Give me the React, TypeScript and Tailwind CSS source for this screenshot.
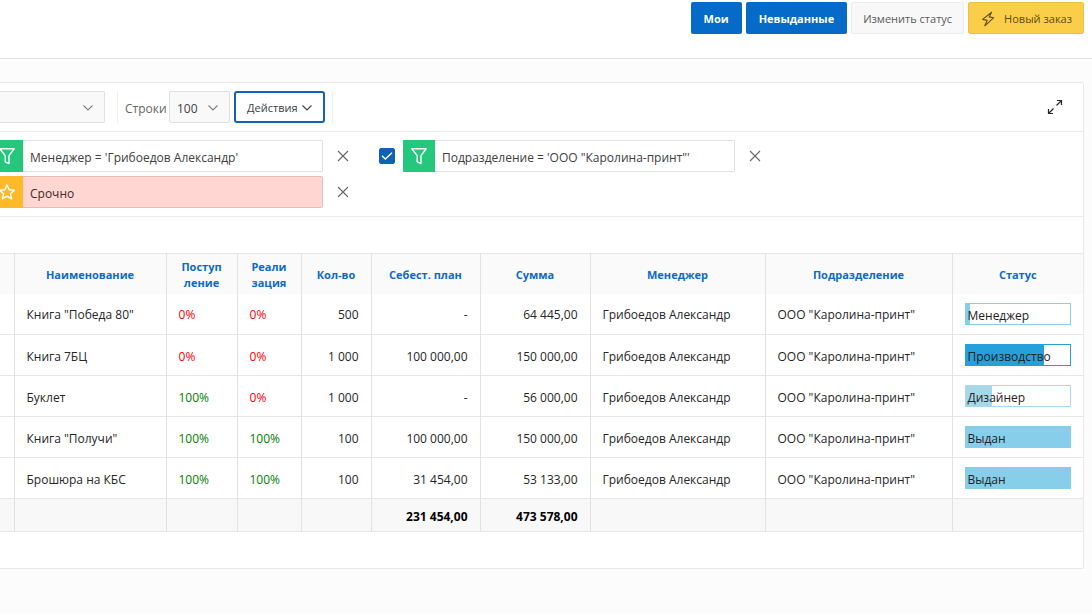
import type { ReactNode } from 'react';
import clsx from 'clsx';

type Order = {
  name: string;
  income: number;
  shipped: number;
  qty: string;
  cost: string;
  total: string;
  status: { label: string; percent: number; fill: string; border: string };
};

const MANAGER = 'Грибоедов Александр';
const DEPARTMENT = 'ООО "Каролина-принт"';

const issued = { label: 'Выдан', percent: 100, fill: 'bg-[#87ceeb]', border: 'border-[#87ceeb]' };

const orders: Order[] = [
  {
    name: 'Книга "Победа 80"',
    income: 0,
    shipped: 0,
    qty: '500',
    cost: '-',
    total: '64 445,00',
    status: { label: 'Менеджер', percent: 4, fill: 'bg-[#87ceeb]', border: 'border-[#87ceeb]' },
  },
  {
    name: 'Книга 7БЦ',
    income: 0,
    shipped: 0,
    qty: '1 000',
    cost: '100 000,00',
    total: '150 000,00',
    status: { label: 'Производство', percent: 75, fill: 'bg-[#26a0da]', border: 'border-[#26a0da]' },
  },
  {
    name: 'Буклет',
    income: 100,
    shipped: 0,
    qty: '1 000',
    cost: '-',
    total: '56 000,00',
    status: { label: 'Дизайнер', percent: 25, fill: 'bg-[#a6d8ea]', border: 'border-[#a9d8ee]' },
  },
  {
    name: 'Книга "Получи"',
    income: 100,
    shipped: 100,
    qty: '100',
    cost: '100 000,00',
    total: '150 000,00',
    status: issued,
  },
  {
    name: 'Брошюра на КБС',
    income: 100,
    shipped: 100,
    qty: '100',
    cost: '31 454,00',
    total: '53 133,00',
    status: issued,
  },
];

const columns = [
  { title: '', width: 'w-[14px]' },
  { title: 'Наименование', width: 'w-[152px]' },
  { title: 'Поступ ление', width: 'w-[71px]' },
  { title: 'Реали зация', width: 'w-[64px]' },
  { title: 'Кол-во', width: 'w-[70px]' },
  { title: 'Себест. план', width: 'w-[109px]' },
  { title: 'Сумма', width: 'w-[110px]' },
  { title: 'Менеджер', width: 'w-[175px]' },
  { title: 'Подразделение', width: 'w-[187px]' },
  { title: 'Статус', width: 'w-[131px]' },
];

function Chevron({ className }: { className?: string }) {
  return (
    <svg viewBox="0 0 10 6" fill="none" stroke="currentColor" className={clsx('h-[6px] w-[10px]', className)}>
      <path d="M0.5 0.5L5 5l4.5-4.5" strokeWidth={1.1} />
    </svg>
  );
}

function FunnelIcon() {
  return (
    <svg viewBox="0 0 18 18" fill="none" stroke="currentColor" className="size-[18px] shrink-0">
      <path d="M1.8 1.8h14.4L11 8.6v8L7.2 14.8V8.6z" strokeWidth={1.4} strokeLinejoin="round" />
    </svg>
  );
}

function StarIcon() {
  return (
    <svg viewBox="0 0 18 18" fill="none" stroke="currentColor" className="size-[18px] shrink-0">
      <path
        d="M9 1.8l2.1 4.9 5.3.5-4 3.5 1.2 5.2L9 13.2l-4.6 2.7 1.2-5.2-4-3.5 5.3-.5z"
        strokeWidth={1.4}
        strokeLinejoin="round"
      />
    </svg>
  );
}

function BoltIcon() {
  return (
    <svg viewBox="0 0 16 16" fill="none" stroke="currentColor" className="size-4">
      <path d="M11.6 1.2L2.6 8.4l4.6 1L4.8 14.8l8.8-7.9-4.4-1z" strokeWidth={1.1} strokeLinejoin="round" />
    </svg>
  );
}

function ExpandIcon() {
  return (
    <svg viewBox="0 0 16 16" fill="none" stroke="currentColor" className="size-4">
      <path d="M10 1.5h4.5V6M14.5 1.5L9.5 6.5M6 14.5H1.5V10M1.5 14.5l5-5" strokeWidth={1.2} />
    </svg>
  );
}

function RemoveButton() {
  return (
    <button type="button" aria-label="Удалить" className="flex size-8 shrink-0 items-center justify-center text-[#666]">
      <svg viewBox="0 0 12 12" stroke="currentColor" className="size-3">
        <path d="M1 1l10 10M11 1L1 11" strokeWidth={1.1} />
      </svg>
    </button>
  );
}

function FilterChip({ icon, iconClass, textClass, children }: {
  icon: ReactNode;
  iconClass: string;
  textClass: string;
  children: ReactNode;
}) {
  return (
    <div className="flex h-8 min-w-0 flex-1">
      <span className={clsx('flex shrink-0 items-center justify-end pr-[7px] text-white', iconClass)}>{icon}</span>
      <button
        type="button"
        className={clsx('min-w-0 flex-1 truncate rounded-r-xs border border-l-0 px-[7px] pt-[3px] text-left', textClass)}
      >
        {children}
      </button>
    </div>
  );
}

function Percent({ value }: { value: number }) {
  return <span className={value === 0 ? 'text-[#ff0000]' : 'text-[#008000]'}>{value}%</span>;
}

function StatusBar({ status }: { status: Order['status'] }) {
  return (
    <div className={clsx('relative h-[22px] border', status.border)}>
      <div className={clsx('h-full', status.fill)} style={{ width: `${status.percent}%` }} />
      <span className="absolute inset-y-0 left-[2px] leading-6 text-[#222]">{status.label}</span>
    </div>
  );
}

export default function App() {
  return (
    <div className="min-h-screen overflow-hidden bg-[#fcfcfc] font-['Open_Sans','Noto_Sans',sans-serif] text-[12px] leading-4 text-[#262626]">
      <header className="flex justify-end gap-1 border-b border-[#e4e4e4] bg-white pt-[2px] pr-2 pb-6 text-[11px]">
        <button type="button" className="h-8 rounded-xs bg-[#056ac8] px-[13px] pt-[2px] font-bold text-white">
          Мои
        </button>
        <button type="button" className="h-8 rounded-xs bg-[#056ac8] px-[13px] pt-[2px] font-bold text-white">
          Невыданные
        </button>
        <button type="button" className="h-8 rounded-xs border border-[#ececec] bg-[#f8f8f8] px-[11px] pt-[2px] text-[#585858]">
          Изменить статус
        </button>
        <button
          type="button"
          className="flex h-8 items-center gap-2 rounded-xs border border-[#eec03f] bg-[#fbce4a] px-[11px] pt-[2px] text-[#5f4d15]"
        >
          <BoltIcon />
          Новый заказ
        </button>
      </header>

      <main className="pt-[23px] pr-2">
        <section className="rounded-r-xs border-y border-r border-[#e8e8e8] bg-white">
          {/* Toolbar */}
          <div className="flex items-center border-b border-[#ebebeb] py-2">
            <div className="relative w-[105px]">
              <select
                aria-label="Отчет"
                className="block h-8 w-full appearance-none rounded-r-xs border border-l-0 border-[#dfdfdf] bg-[#f9f9f9]"
              >
                <option value=""></option>
              </select>
              <Chevron className="pointer-events-none absolute top-[14px] right-3 text-[#808080]" />
            </div>
            <div className="ml-3 flex h-8 items-center gap-1 border-x border-[#f0f0f0] px-[7px]">
              <label htmlFor="rows" className="w-10 pt-[3px] text-[#666]">
                Строки
              </label>
              <div className="relative w-[61px]">
                <select
                  id="rows"
                  defaultValue="100"
                  className="block h-8 w-full appearance-none rounded-xs border border-[#dfdfdf] bg-[#f9f9f9] pt-[3px] pl-[7px] text-[#404040]"
                >
                  <option>50</option>
                  <option>100</option>
                  <option>500</option>
                </select>
                <Chevron className="pointer-events-none absolute top-[14px] right-3 text-[#808080]" />
              </div>
              <button
                type="button"
                className="flex h-8 items-center gap-1 rounded-[3px] border-2 border-[#0f62b5] bg-white px-[11px] pt-[2px] text-[11px] text-[#404040]"
              >
                Действия
                <Chevron />
              </button>
            </div>
            <button type="button" aria-label="Развернуть" className="mr-3 ml-auto flex size-8 items-center justify-center text-[#262626]">
              <ExpandIcon />
            </button>
          </div>

          {/* Active filters */}
          <div className="grid grid-cols-[359px_392px] gap-x-5 gap-y-1 border-b border-[#ebebeb] py-2">
            <div className="flex items-center gap-1">
              <FilterChip icon={<FunnelIcon />} iconClass="w-[23px] bg-[#25c77c]" textClass="border-[#dfdfdf] bg-white text-[#404040]">
                Менеджер = 'Грибоедов Александр'
              </FilterChip>
              <RemoveButton />
            </div>
            <div className="flex items-center gap-1">
              <label className="relative mr-1 size-4 shrink-0">
                <input
                  type="checkbox"
                  defaultChecked
                  aria-label="Подразделение"
                  className="block size-4 appearance-none rounded-xs border border-[#0f62b5] checked:bg-[#0f62b5]"
                />
                <svg viewBox="0 0 16 16" fill="none" stroke="white" className="pointer-events-none absolute inset-0 size-4">
                  <path d="M3 7.8l3.3 3.3L13 4.8" strokeWidth={1.4} />
                </svg>
              </label>
              <FilterChip icon={<FunnelIcon />} iconClass="w-8 bg-[#25c77c]" textClass="border-[#dfdfdf] bg-white text-[#404040]">
                Подразделение = 'ООО "Каролина-принт"'
              </FilterChip>
              <RemoveButton />
            </div>
            <div className="flex items-center gap-1">
              <FilterChip icon={<StarIcon />} iconClass="w-[23px] bg-[#fdb927]" textClass="border-[#e8bdb9] bg-[#ffd6d2] text-[#402a28]">
                Срочно
              </FilterChip>
              <RemoveButton />
            </div>
          </div>

          <table className="mt-9 mb-9 w-full table-fixed border-collapse border-y border-[#e6e6e6]">
            <thead>
              <tr className="h-10 bg-[#fafafa] text-[11px]">
                {columns.map((col) => (
                  <th
                    key={col.title}
                    scope="col"
                    className={clsx(
                      'border-l border-[#e2e2e2] px-3 pt-[3px] pb-0 font-bold text-[#0f6ac4] first:border-l-0 first:px-0',
                      col.width,
                    )}
                  >
                    {col.title}
                  </th>
                ))}
              </tr>
            </thead>
            <tbody>
              {orders.map((order) => (
                <tr
                  key={order.name}
                  className="h-[41px] border-b border-[#e6e6e6] *:border-l *:border-[#e2e2e2] *:px-3 *:pt-[3px] *:pb-0 *:whitespace-nowrap *:first:border-l-0 *:first:px-0 *:last:pt-0"
                >
                  <td />
                  <td>{order.name}</td>
                  <td>
                    <Percent value={order.income} />
                  </td>
                  <td>
                    <Percent value={order.shipped} />
                  </td>
                  <td className="text-right">{order.qty}</td>
                  <td className="text-right">{order.cost}</td>
                  <td className="text-right">{order.total}</td>
                  <td>{MANAGER}</td>
                  <td>{DEPARTMENT}</td>
                  <td>
                    <StatusBar status={order.status} />
                  </td>
                </tr>
              ))}
            </tbody>
            <tfoot>
              <tr className="h-[33px] bg-[#f8f8f8] text-right font-bold text-black *:border-l *:border-[#e2e2e2] *:px-3 *:pt-[3px] *:pb-0 *:first:border-l-0 *:first:px-0">
                <td />
                <td />
                <td />
                <td />
                <td />
                <td>231 454,00</td>
                <td>473 578,00</td>
                <td />
                <td />
                <td />
              </tr>
            </tfoot>
          </table>
        </section>
      </main>
    </div>
  );
}
